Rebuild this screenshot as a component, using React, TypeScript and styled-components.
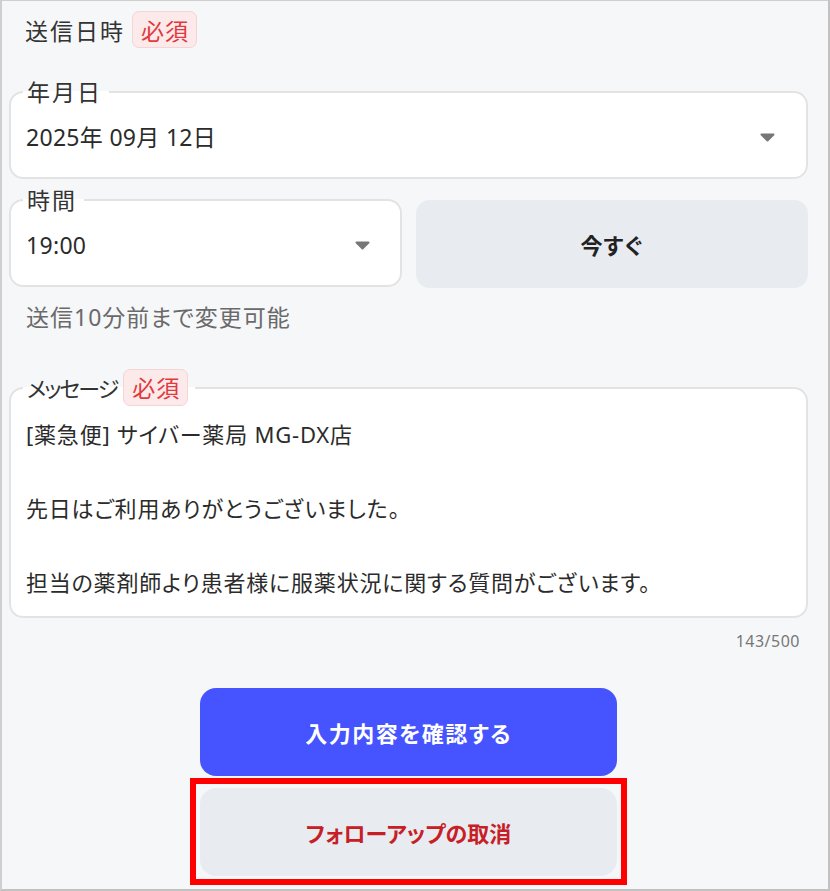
import styled, { createGlobalStyle } from "styled-components";

const GlobalStyle = createGlobalStyle`
  html, body {
    margin: 0;
    padding: 0;
    background: #ffffff;
  }
  body {
    font-family: "Noto Sans", "Noto Sans CJK JP", sans-serif;
    color: #2f2f2f;
  }
  * {
    box-sizing: border-box;
  }
`;

const Frame = styled.div`
  width: 830px;
  height: 891px;
  background: #f6f7f9;
  border-top: 1px solid #cfcfcf;
  border-left: 2px solid #cfcfcf;
  border-right: 2px solid #c2c2c2;
  border-bottom: 2px solid #c2c2c2;
  padding: 10px 20px 0 7px;
  display: flex;
  flex-direction: column;
`;

const SectionLabel = styled.div`
  display: flex;
  align-items: center;
  gap: 7px;
  padding-left: 16px;
  font-size: 23px;
  letter-spacing: 2px;
  color: #333;
  height: 37px;
`;

const RequiredBadge = styled.span`
  display: inline-flex;
  align-items: center;
  height: 37px;
  padding: 0 7px 0 8px;
  background: #fce9ea;
  border: 1px solid #f6d3d5;
  border-radius: 7px;
  color: #e0393e;
  font-size: 23px;
  letter-spacing: 1px;
`;

const Field = styled.fieldset`
  margin: 0;
  padding: 0;
  min-width: 0;
  background: #ffffff;
  border: 2px solid #e3e3e3;
  border-radius: 14px;
`;

const Legend = styled.legend`
  display: flex;
  align-items: center;
  gap: 6px;
  margin-left: 12px;
  padding: 0 7px 0 4px;
  font-size: 23px;
  line-height: 26px;
  letter-spacing: 2px;
  color: #333;
  font-feature-settings: "palt";
`;

const KanaLabel = styled.span`
  font-size: 22px;
  letter-spacing: -2px;
`;

const SelectValue = styled.div<{ $caretGap: number }>`
  display: flex;
  align-items: center;
  justify-content: space-between;
  padding: 17px ${({ $caretGap }) => $caretGap}px 25px 15px;
  height: 72px;
  font-size: 23px;
  line-height: 30px;
  letter-spacing: 0.3px;
  color: #2b2b2b;
`;

const Caret = () => (
  <svg width="15" height="9" viewBox="0 0 15 9">
    <path
      d="M1.5 1.5 H13.5 L7.5 7.5 Z"
      fill="#777"
      stroke="#777"
      strokeWidth="2"
      strokeLinejoin="round"
    />
  </svg>
);

const TimeRow = styled.div`
  display: grid;
  grid-template-columns: 1fr 1fr;
  align-items: end;
  column-gap: 14px;
  margin-top: 8px;
`;

const NowButton = styled.button`
  height: 88px;
  margin-bottom: -1px;
  border: none;
  border-radius: 14px;
  background: #e8ecf1;
  font-family: inherit;
  font-size: 22px;
  font-weight: 700;
  letter-spacing: 1px;
  font-feature-settings: "palt";
  color: #222;
`;

const Hint = styled.div`
  margin-top: 17px;
  padding-left: 17px;
  font-size: 23px;
  line-height: 26px;
  letter-spacing: 1px;
  font-feature-settings: "palt";
  color: #6a6a6a;
`;

const MessageField = styled(Field)`
  margin-top: 39px;
`;

const MessageBody = styled.div`
  padding: 10px 16px 15px 15px;
  font-size: 22px;
  line-height: 37px;
  letter-spacing: 0.8px;
  font-feature-settings: "palt";
  white-space: pre-wrap;
  color: #2b2b2b;
`;

const Counter = styled.div`
  margin-top: 12px;
  padding-right: 8px;
  text-align: right;
  font-size: 16px;
  line-height: 22px;
  letter-spacing: 0.5px;
  color: #777;
`;

const Actions = styled.div`
  display: flex;
  flex-direction: column;
  align-items: center;
  margin-top: 36px;
`;

const ActionButton = styled.button<{ $variant: "primary" | "cancel" }>`
  width: 417px;
  height: 88px;
  border: none;
  border-radius: 16px;
  font-family: inherit;
  font-size: 22px;
  font-weight: 700;
  font-feature-settings: "palt";
  letter-spacing: ${({ $variant }) => ($variant === "primary" ? "1.5px" : "0")};
  background: ${({ $variant }) => ($variant === "primary" ? "#4554ff" : "#e8ecf1")};
  color: ${({ $variant }) => ($variant === "primary" ? "#ffffff" : "#c62026")};
`;

const Highlight = styled.div`
  margin-top: 2px;
  border: 6px solid #ff0000;
  padding: 4px 4px 3px;
`;

const message = `[薬急便] サイバー薬局 MG-DX店

先日はご利用ありがとうございました。

担当の薬剤師より患者様に服薬状況に関する質問がございます。`;

export default function App() {
  return (
    <>
      <GlobalStyle />
      <Frame>
        <SectionLabel>
          送信日時
          <RequiredBadge>必須</RequiredBadge>
        </SectionLabel>

        <Field style={{ marginTop: 31 }}>
          <Legend>年月日</Legend>
          <SelectValue $caretGap={31}>
            <span>2025年 09月 12日</span>
            <Caret />
          </SelectValue>
        </Field>

        <TimeRow>
          <Field>
            <Legend>時間</Legend>
            <SelectValue $caretGap={30}>
              <span>19:00</span>
              <Caret />
            </SelectValue>
          </Field>
          <NowButton>今すぐ</NowButton>
        </TimeRow>

        <Hint>送信10分前まで変更可能</Hint>

        <MessageField>
          <Legend>
            <KanaLabel>メッセージ</KanaLabel>
            <RequiredBadge>必須</RequiredBadge>
          </Legend>
          <MessageBody>{message}</MessageBody>
        </MessageField>

        <Counter>143/500</Counter>

        <Actions>
          <ActionButton $variant="primary">入力内容を確認する</ActionButton>
          <Highlight>
            <ActionButton $variant="cancel">フォローアップの取消</ActionButton>
          </Highlight>
        </Actions>
      </Frame>
    </>
  );
}
